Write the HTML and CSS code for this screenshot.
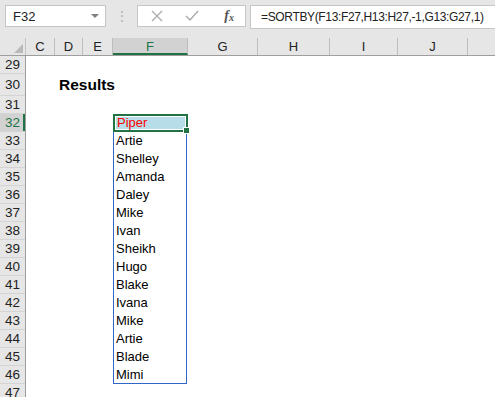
FILE: index.html
```html
<!DOCTYPE html>
<html lang="en">
<head>
    <meta charset="UTF-8">
    <title>SORTBY Results</title>
    <link rel="stylesheet" href="styles.css">
</head>
<body>
    <!-- Formula bar -->
    <div class="toolbar">
        <div class="namebox">
            <span>F32</span>
            <span class="caret"></span>
        </div>
        <div class="dots">&#8942;</div>
        <div class="fxbox">
            <svg width="12" height="12" viewBox="0 0 12 12"><path d="M1 1 L11 11 M11 1 L1 11" stroke="#a9a9a9" stroke-width="1.2" fill="none"/></svg>
            <svg width="14" height="12" viewBox="0 0 14 12"><path d="M1 6 L5 10 L13 1" stroke="#a9a9a9" stroke-width="1.4" fill="none"/></svg>
            <span class="fx">f<sub>x</sub></span>
        </div>
        <div class="formula">=SORTBY(F13:F27,H13:H27,-1,G13:G27,1)</div>
    </div>

    <!-- Sheet -->
    <div class="sheet">
        <div class="colheads">
            <div class="corner"></div>
            <div class="colhead w-c">C</div>
            <div class="colhead w-d">D</div>
            <div class="colhead w-e">E</div>
            <div class="colhead w-f selected">F</div>
            <div class="colhead w-g">G</div>
            <div class="colhead w-h">H</div>
            <div class="colhead w-i">I</div>
            <div class="colhead w-j">J</div>
            <div class="colhead rest"></div>
        </div>

        <div class="body">
            <div class="rowheads">
                <div class="rowhead">29</div>
                <div class="rowhead tall">30</div>
                <div class="rowhead">31</div>
                <div class="rowhead selected">32</div>
                <div class="rowhead">33</div>
                <div class="rowhead">34</div>
                <div class="rowhead">35</div>
                <div class="rowhead">36</div>
                <div class="rowhead">37</div>
                <div class="rowhead">38</div>
                <div class="rowhead">39</div>
                <div class="rowhead">40</div>
                <div class="rowhead">41</div>
                <div class="rowhead">42</div>
                <div class="rowhead">43</div>
                <div class="rowhead">44</div>
                <div class="rowhead">45</div>
                <div class="rowhead">46</div>
                <div class="rowhead">47</div>
            </div>

            <div class="cells">
                <div class="title">Results</div>
                <div class="list">
                    <div class="item active">Piper<span class="handle"></span></div>
                    <div class="item">Artie</div>
                    <div class="item">Shelley</div>
                    <div class="item">Amanda</div>
                    <div class="item">Daley</div>
                    <div class="item">Mike</div>
                    <div class="item">Ivan</div>
                    <div class="item">Sheikh</div>
                    <div class="item">Hugo</div>
                    <div class="item">Blake</div>
                    <div class="item">Ivana</div>
                    <div class="item">Mike</div>
                    <div class="item">Artie</div>
                    <div class="item">Blade</div>
                    <div class="item">Mimi</div>
                </div>
            </div>
        </div>
    </div>
</body>
</html>
```

FILE: styles.css
```css
/* General */
body {
    margin: 0;
    padding: 0;
    width: 495px;
    height: 397px;
    overflow: hidden;
    font-family: Arial, "Liberation Sans", sans-serif;
    font-size: 13px;
    color: #000000;
    background: #ffffff;
}

/* Formula bar */
.toolbar {
    display: flex;
    align-items: flex-start;
    height: 38px;
    padding: 5px 0 0 5px;
    box-sizing: border-box;
    background: #e6e6e6;
}

.toolbar > div {
    flex-shrink: 0;
}

.namebox {
    display: flex;
    align-items: center;
    justify-content: space-between;
    width: 101px;
    height: 22px;
    padding: 0 6px 0 7px;
    box-sizing: border-box;
    background: #ffffff;
    border: 1px solid #c6c6c6;
    color: #222222;
}

.caret {
    width: 0;
    height: 0;
    border-left: 4px solid transparent;
    border-right: 4px solid transparent;
    border-top: 4px solid #808080;
}

.dots {
    width: 31px;
    height: 22px;
    line-height: 22px;
    text-align: center;
    color: #b5b5b5;
    font-size: 14px;
}

.fxbox {
    display: flex;
    align-items: center;
    gap: 22px;
    width: 109px;
    height: 22px;
    padding: 0 11px 0 13px;
    box-sizing: border-box;
    background: #ffffff;
    border: 1px solid #c6c6c6;
}

.fx {
    margin-left: auto;
    font-family: "Liberation Serif", serif;
    font-style: italic;
    font-weight: bold;
    font-size: 14px;
    color: #555555;
}

.fx sub {
    font-size: 10px;
    vertical-align: -1px;
}

.toolbar > .formula {
    flex: 1 1 auto;
    min-width: 0;
    height: 22px;
    line-height: 22px;
    margin-left: 4px;
    padding-left: 10px;
    background: #ffffff;
    border: 1px solid #c6c6c6;
    border-right: none;
    white-space: nowrap;
    overflow: hidden;
    font-size: 12px;
    letter-spacing: -0.35px;
    color: #222222;
}

/* Sheet */
.colheads {
    display: flex;
    height: 17px;
    background: #e6e6e6;
    border-bottom: 1px solid #9e9e9e;
}

.corner {
    position: relative;
    width: 25px;
    border-right: 1px solid #c2c2c2;
}

.corner::after {
    content: "";
    position: absolute;
    right: 2px;
    bottom: 2px;
    border-left: 9px solid transparent;
    border-bottom: 9px solid #b9b9b9;
}

.colhead {
    box-sizing: border-box;
    line-height: 17px;
    text-align: center;
    border-right: 1px solid #bdbdbd;
    color: #222222;
}

.colhead.selected {
    background: #d2d2d2;
    color: #217346;
    border-bottom: 2px solid #217346;
}

.w-c { width: 29px; }
.w-d { width: 28px; }
.w-e { width: 30px; }
.w-f { width: 75px; }
.w-g { width: 70px; }
.w-h { width: 72px; }
.w-i { width: 68px; }
.w-j { width: 70px; }
.rest { flex: 1; border-right: none; }

.body {
    display: flex;
}

.rowheads {
    width: 25px;
    background: #e6e6e6;
    border-right: 1px solid #9e9e9e;
}

.rowhead {
    height: 18px;
    line-height: 18px;
    text-align: center;
    font-size: 13.5px;
    color: #222222;
    border-bottom: 1px solid #d4d4d4;
    box-sizing: border-box;
}

.rowhead.tall {
    height: 22px;
    line-height: 22px;
}

.rowhead.selected {
    background: #d2d2d2;
    color: #217346;
    box-shadow: inset -2px 0 0 #217346;
}

.cells {
    flex: 1;
    display: grid;
    grid-template-columns: 29px 28px 30px 75px 1fr;
    grid-template-rows: 18px 22px 18px repeat(16, 18px);
}

.title {
    grid-column: 2 / span 3;
    grid-row: 2;
    padding-left: 4px;
    line-height: 22px;
    font-weight: bold;
    font-size: 15.5px;
}

.list {
    grid-column: 4;
    grid-row: 4 / span 15;
    border: 1px solid #2f66c8;
    border-top: none;
    margin-right: 1px;
}

.item {
    position: relative;
    height: 18px;
    line-height: 18px;
    padding-left: 2px;
}

.item.active {
    margin: 0 -2px 0 -1px;
    padding-left: 2px;
    height: 18px;
    line-height: 14px;
    box-sizing: border-box;
    border: 2px solid #217346;
    background: #b7dee8;
    box-shadow: inset 0 0 0 1px #ffffff;
    color: #ff0000;
}

.handle {
    position: absolute;
    right: -4px;
    bottom: -4px;
    width: 5px;
    height: 5px;
    background: #217346;
    border: 1px solid #ffffff;
}
```
